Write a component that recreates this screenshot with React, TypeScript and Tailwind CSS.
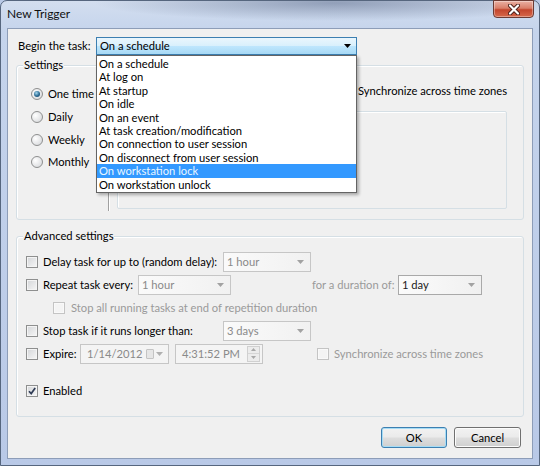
import React from "react";

const uiFont = "font-['Lato','Noto_Sans',sans-serif]";

function Arrow({ color = "#000" }: { color?: string }) {
  return (
    <svg width="7" height="4" viewBox="0 0 7 4" className="shrink-0">
      <path d="M0 0h7L3.5 4z" fill={color} />
    </svg>
  );
}

function Checkbox({ checked = false, disabled = false }: { checked?: boolean; disabled?: boolean }) {
  return (
    <span
      className={
        disabled
          ? "flex h-[12px] w-[12px] shrink-0 items-center justify-center border border-[#c4c4c4] bg-[#f4f4f4] shadow-[inset_0_0_0_1px_#f9f9f9]"
          : "flex h-[12px] w-[12px] shrink-0 items-center justify-center border border-[#8e8f8f] bg-[linear-gradient(135deg,#d3d5d8,#f7f7f7)] shadow-[inset_0_0_0_1px_#f4f4f4]"
      }
    >
      {checked && (
        <svg width="10" height="10" viewBox="0 0 10 10">
          <path d="M2 5.2 L4.2 7.6 L8.2 2" fill="none" stroke="#2f3b55" strokeWidth="1.7" />
        </svg>
      )}
    </span>
  );
}

function Radio({ checked = false }: { checked?: boolean }) {
  return (
    <span className="flex h-[12px] w-[12px] shrink-0 items-center justify-center rounded-full border border-[#8e8f8f] bg-[radial-gradient(circle_at_35%_35%,#ffffff,#d2d4d7)]">
      {checked && (
        <span className="h-[6px] w-[6px] rounded-full bg-[radial-gradient(circle_at_40%_35%,#a6d8ef,#2a6a93_55%,#173f5e)]" />
      )}
    </span>
  );
}

function DisabledCombo({ value, width, dark = false }: { value: string; width: string; dark?: boolean }) {
  return (
    <div
      className={`flex h-[20px] ${width} shrink-0 items-center justify-between border pl-[3px] pr-[6px] ${
        dark
          ? "border-[#a9a9a9] bg-[linear-gradient(90deg,#fbfbfb,#f0f0f0)] text-[#1a1a1a]"
          : "border-[#c6c6c6] bg-[linear-gradient(90deg,#fafafa,#f1f1f1)] text-[#8a8a8a]"
      }`}
    >
      <span>{value}</span>
      <Arrow color="#a2a2a2" />
    </div>
  );
}

const triggers = [
  "On a schedule",
  "At log on",
  "At startup",
  "On idle",
  "On an event",
  "At task creation/modification",
  "On connection to user session",
  "On disconnect from user session",
  "On workstation lock",
  "On workstation unlock",
];

export default function App() {
  return (
    <div className={`${uiFont} h-[466px] w-[540px] whitespace-nowrap bg-[#b9c9e6] text-[11.2px] leading-[14px] text-black`}>
      <div className="flex h-[466px] w-[540px] flex-col rounded-t-[7px] border border-[#56667e] bg-[radial-gradient(ellipse_240px_18px_at_62%_2px,rgba(92,108,140,0.55),transparent),linear-gradient(180deg,#d3deef_0px,#c5d4ec_30px,#b9c9e7_100%)] px-[6px] pb-[6px]">
        {/* title bar */}
        <div className="flex h-[27px] shrink-0 items-start justify-between">
          <span className="pt-[5px] text-[12px] leading-[15px] text-[#111]">New Trigger</span>
          <div className="-mr-[1px] -mt-[1px] flex h-[18px] w-[41px] items-center justify-center rounded-b-[4px] border border-[#6b3a33] bg-[linear-gradient(180deg,#eab0a3_0%,#d97e69_45%,#c3452d_55%,#d6684a_100%)] shadow-[inset_0_0_0_1px_rgba(255,255,255,0.35)]">
            <svg width="12" height="11" viewBox="0 0 12 11">
              <path d="M2 1.5 L10 9.5 M10 1.5 L2 9.5" stroke="#4a1f19" strokeWidth="4" strokeLinecap="round" />
              <path d="M2 1.5 L10 9.5 M10 1.5 L2 9.5" stroke="#ffffff" strokeWidth="2.2" strokeLinecap="round" />
            </svg>
          </div>
        </div>

        {/* client area */}
        <div className="flex flex-1 flex-col border border-[#8d9db8] bg-[#f0f0f0]">
          {/* begin the task */}
          <div className="flex items-center pl-[10px] pt-[8px]">
            <span className="w-[78px] shrink-0">Begin the task:</span>
            <div className="relative">
              <div className="flex h-[18px] w-[261px] items-center justify-between border border-[#3c7fb1] bg-[linear-gradient(180deg,#eaf6fd_0%,#d9f0fc_48%,#bee6fd_52%,#a7d9f5_100%)] pl-[3px] pr-[5px]">
                <span>On a schedule</span>
                <Arrow />
              </div>
              {/* open trigger list */}
              <div className="absolute left-0 top-full z-10 w-[261px] border border-[#646464] bg-white py-px shadow-[2px_2px_3px_rgba(0,0,0,0.3)]">
                {triggers.map((t) => (
                  <div
                    key={t}
                    className={
                      t === "On workstation lock"
                        ? "h-[13.4px] bg-[#3399ff] pl-[2px] leading-[13.4px] text-[#e8f6ff]"
                        : "h-[13.4px] pl-[2px] leading-[13.4px]"
                    }
                  >
                    {t}
                  </div>
                ))}
              </div>
            </div>
          </div>

          {/* settings group */}
          <div className="relative mx-[8px] mt-[10px] flex h-[155px] rounded-[3px] border border-[#d5dfe5] shadow-[inset_1px_1px_0_#ffffff]">
            <span className="absolute -top-[8px] left-[6px] bg-[#f0f0f0] px-px">Settings</span>
            <div className="flex w-[91px] shrink-0 flex-col pl-[14px] pt-[17px]">
              {["One time", "Daily", "Weekly", "Monthly"].map((r, i) => (
                <div key={r} className="flex h-[22.7px] items-center gap-[5px]">
                  <Radio checked={i === 0} />
                  <span>{r}</span>
                </div>
              ))}
            </div>
            <div className="mb-[8px] mt-[9px] w-px bg-[#a0a0a0] shadow-[1px_0_0_#ffffff]" />
            <div className="flex flex-1 flex-col pl-[8px] pr-[16px] pt-[15px]">
              {/* start date / time row */}
              <div className="flex h-[20px] items-center">
                <span className="w-[40px]" />
                <div className="h-[20px] w-[92px] border border-[#abadb3] bg-white" />
                <div className="ml-[6px] h-[20px] w-[72px] border border-[#abadb3] bg-white" />
                <span className="ml-[11px]">
                  <Checkbox />
                </span>
                <span className="ml-[8px]">Synchronize across time zones</span>
              </div>
              <div className="mt-[10px] h-[98px] rounded-[2px] border border-[#d5dfe5] shadow-[inset_1px_1px_0_#ffffff]" />
            </div>
          </div>

          {/* advanced settings group */}
          <div className="relative mx-[8px] mt-[16px] flex h-[181px] flex-col rounded-[3px] border border-[#d5dfe5] pl-[9px] pt-[13px] shadow-[inset_1px_1px_0_#ffffff]">
            <span className="absolute -top-[8px] left-[6px] bg-[#f0f0f0] px-px">Advanced settings</span>

            <div className="flex h-[23px] items-center">
              <Checkbox />
              <span className="ml-[5px] w-[180px] shrink-0">Delay task for up to (random delay):</span>
              <DisabledCombo value="1 hour" width="w-[88px]" />
            </div>

            <div className="flex h-[23px] items-center">
              <Checkbox />
              <span className="ml-[5px] w-[95px] shrink-0">Repeat task every:</span>
              <DisabledCombo value="1 hour" width="w-[93px]" />
              <span className="ml-[81px] w-[86px] shrink-0 text-[#9a9a9a]">for a duration of:</span>
              <DisabledCombo value="1 day" width="w-[84px]" dark />
            </div>

            <div className="flex h-[23px] items-center pl-[27px]">
              <Checkbox disabled />
              <span className="ml-[6px] text-[#9a9a9a]">Stop all running tasks at end of repetition duration</span>
            </div>

            <div className="flex h-[23px] items-center">
              <Checkbox />
              <span className="ml-[5px] w-[180px] shrink-0">Stop task if it runs longer than:</span>
              <DisabledCombo value="3 days" width="w-[88px]" />
            </div>

            <div className="flex h-[23px] items-center">
              <Checkbox />
              <span className="ml-[5px] w-[37px] shrink-0">Expire:</span>
              <div className="flex h-[20px] w-[89px] shrink-0 items-center border border-[#c6c6c6] bg-[#f4f4f4] pl-[6px] pr-[5px] text-[#8a8a8a]">
                <span className="flex-1">1/14/2012</span>
                <span className="h-[10px] w-[8px] rounded-[1px] border border-[#c4c4c4] bg-[#e6e6e6]" />
                <span className="ml-[2px]">
                  <Arrow color="#b0b0b0" />
                </span>
              </div>
              <div className="ml-[6px] flex h-[20px] w-[88px] shrink-0 items-center border border-[#c6c6c6] bg-[#f4f4f4] pl-[6px] pr-[2px] text-[#8a8a8a]">
                <span className="flex-1">4:31:52 PM</span>
                <div className="flex h-[16px] w-[13px] flex-col border border-[#d0d0d0] bg-[#ececec]">
                  <div className="flex flex-1 items-center justify-center border-b border-[#d6d6d6]">
                    <svg width="5" height="3" viewBox="0 0 5 3">
                      <path d="M0 3h5L2.5 0z" fill="#a8a8a8" />
                    </svg>
                  </div>
                  <div className="flex flex-1 items-center justify-center">
                    <svg width="5" height="3" viewBox="0 0 5 3">
                      <path d="M0 0h5L2.5 3z" fill="#a8a8a8" />
                    </svg>
                  </div>
                </div>
              </div>
              <span className="ml-[54px]">
                <Checkbox disabled />
              </span>
              <span className="ml-[5px] text-[#9a9a9a]">Synchronize across time zones</span>
            </div>

            <div className="mt-[14px] flex h-[23px] items-center">
              <Checkbox checked />
              <span className="ml-[5px]">Enabled</span>
            </div>
          </div>

          {/* dialog buttons */}
          <div className="mt-[10px] flex justify-end gap-[7px] pr-[11px]">
            <button className="flex h-[21px] w-[66px] items-center justify-center rounded-[3px] border border-[#3c7fb1] bg-[linear-gradient(180deg,#f2f2f2_0%,#ebebeb_45%,#dddddd_55%,#cfcfcf_100%)] shadow-[inset_0_0_0_1px_#a6dcf5]">
              OK
            </button>
            <button className="flex h-[21px] w-[67px] items-center justify-center rounded-[3px] border border-[#707070] bg-[linear-gradient(180deg,#f2f2f2_0%,#ebebeb_45%,#dddddd_55%,#cfcfcf_100%)] shadow-[inset_0_0_0_1px_#fcfcfc]">
              Cancel
            </button>
          </div>
        </div>
      </div>
    </div>
  );
}
